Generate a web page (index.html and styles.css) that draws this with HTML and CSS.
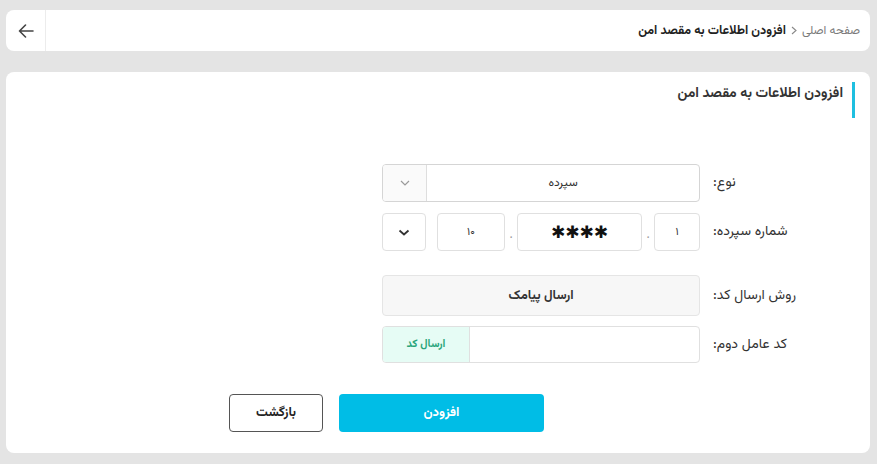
FILE: index.html
```html
<!DOCTYPE html>
<html dir="rtl" lang="fa">
<head>
<meta charset="utf-8">
<title>افزودن اطلاعات به مقصد امن</title>
<link rel="stylesheet" href="styles.css">
</head>
<body>
<div class="page">
  <header class="topbar">
    <nav class="crumbs">
      <span class="crumb-home">صفحه اصلی</span>
      <svg class="crumb-sep" width="6" height="9" viewBox="0 0 6 9"><polyline points="1,1 5,4.5 1,8" fill="none" stroke="#888" stroke-width="1.1"/></svg>
      <span class="crumb-current">افزودن اطلاعات به مقصد امن</span>
    </nav>
    <button class="back" type="button" aria-label="بازگشت">
      <svg width="16" height="14" viewBox="0 0 16 14"><path d="M15 7H1.5M7.5 1L1.5 7l6 6" fill="none" stroke="#444" stroke-width="1.6" stroke-linecap="round" stroke-linejoin="round"/></svg>
    </button>
  </header>

  <main class="card">
    <h1 class="title">افزودن اطلاعات به مقصد امن</h1>

    <form class="form">
      <div class="row row-type">
        <label class="label">نوع:</label>
        <div class="field select">
          <span class="select-value">سپرده</span>
          <span class="select-arrow">
            <svg width="10" height="6" viewBox="0 0 10 6"><polyline points="1,1 5,5 9,1" fill="none" stroke="#9a9a9a" stroke-width="1.2"/></svg>
          </span>
        </div>
      </div>

      <div class="row row-number">
        <label class="label">شماره سپرده:</label>
        <div class="field parts">
          <span class="part part-a">۱</span>
          <span class="dot">.</span>
          <span class="part part-b"><span class="stars">✱✱✱✱</span></span>
          <span class="dot">.</span>
          <span class="part part-c">۱۰</span>
          <span class="part part-arrow">
            <svg width="12" height="7" viewBox="0 0 12 7"><polyline points="1.5,1.5 6,5.5 10.5,1.5" fill="none" stroke="#333" stroke-width="1.8"/></svg>
          </span>
        </div>
      </div>

      <div class="row row-method">
        <label class="label">روش ارسال کد:</label>
        <div class="field method">ارسال پیامک</div>
      </div>

      <div class="row row-code">
        <label class="label">کد عامل دوم:</label>
        <div class="field code">
          <span class="code-input"></span>
          <button class="send" type="button">ارسال کد</button>
        </div>
      </div>
    </form>

    <div class="actions">
      <button class="btn btn-primary" type="button">افزودن</button>
      <button class="btn btn-secondary" type="button">بازگشت</button>
    </div>
  </main>
</div>
</body>
</html>
```

FILE: styles.css
```css
html, body {
  margin: 0;
  padding: 0;
  background: #e4e4e4;
  font-family: "Vazirmatn", "Noto Sans Arabic", "DejaVu Sans", sans-serif;
  color: #333;
}

.page {
  padding: 10px 7px 0 6px;
}

.topbar {
  display: flex;
  height: 41px;
  background: #fff;
  border-radius: 8px;
}

.crumbs {
  flex: 1;
  display: flex;
  align-items: center;
  gap: 5px;
  padding-right: 10px;
  font-size: 12px;
}

.crumb-home {
  color: #7a7a7a;
}

.crumb-current {
  color: #222;
  font-weight: 700;
  font-size: 12.5px;
}

.back {
  width: 40px;
  border: none;
  border-right: 1px solid #ececec;
  background: transparent;
  display: flex;
  align-items: center;
  justify-content: center;
  padding: 0;
}

.card {
  margin-top: 21px;
  height: 381px;
  box-sizing: border-box;
  background: #fff;
  border-radius: 8px;
  padding: 10px 15px 0 0;
}

.title {
  margin: 0;
  height: 36px;
  box-sizing: border-box;
  border-right: 3px solid #1ebfe0;
  padding-right: 9px;
  font-size: 14px;
  font-weight: 700;
  line-height: 24px;
  color: #333;
}

.form {
  margin-top: 46px;
  margin-right: 50px;
  width: 423px;
  display: flex;
  flex-direction: column;
}

.row {
  display: flex;
  align-items: center;
  gap: 13px;
}

.label {
  width: 92px;
  text-align: left;
  font-size: 14px;
  color: #333;
  white-space: nowrap;
}

.field {
  width: 318px;
  box-sizing: border-box;
}

.select {
  height: 38px;
  display: flex;
  border: 1px solid #d5d5d5;
  border-radius: 4px;
  overflow: hidden;
}

.select-value {
  flex: 1;
  display: flex;
  align-items: center;
  justify-content: center;
  font-size: 12px;
  color: #333;
}

.select-arrow {
  width: 43px;
  background: #fafafa;
  border-right: 1px solid #dedede;
  display: flex;
  align-items: center;
  justify-content: center;
}

.row-number {
  margin-top: 11px;
}

.parts {
  height: 38px;
  display: flex;
  align-items: stretch;
}

.part {
  box-sizing: border-box;
  border: 1px solid #e0e0e0;
  border-radius: 4px;
  display: flex;
  align-items: center;
  justify-content: center;
  font-size: 11px;
  color: #333;
}

.part-a { width: 46px; }
.part-b { width: 125px; }
.part-c { width: 68px; }
.part-arrow {
  width: 44px;
  margin-right: 11px;
}

.stars {
  font-family: "DejaVu Sans", sans-serif;
  font-size: 17px;
  letter-spacing: 0;
  color: #111;
}

.dot {
  width: 12px;
  display: flex;
  align-items: center;
  justify-content: center;
  padding-top: 6px;
  font-size: 12px;
  color: #999;
}

.row-method {
  margin-top: 24px;
}

.method {
  height: 41px;
  display: flex;
  align-items: center;
  justify-content: center;
  background: #f7f7f7;
  border: 1px solid #e5e5e5;
  border-radius: 4px;
  font-size: 13px;
  font-weight: 700;
  color: #333;
}

.row-code {
  margin-top: 10px;
}

.code {
  height: 37px;
  display: flex;
  border: 1px solid #e0e0e0;
  border-radius: 4px;
  overflow: hidden;
}

.code-input {
  flex: 1;
}

.send {
  width: 87px;
  border: none;
  border-right: 1px solid #e0e0e0;
  background: #e6fcf5;
  color: #2aa57b;
  font-family: inherit;
  font-size: 11px;
  font-weight: 700;
  padding: 0;
}

.actions {
  margin-top: 31px;
  padding-right: 311px;
  display: flex;
  gap: 16px;
}

.btn {
  height: 38px;
  border-radius: 4px;
  font-family: inherit;
  font-size: 13px;
  font-weight: 700;
  padding: 0;
  box-sizing: border-box;
}

.btn-primary {
  width: 205px;
  border: none;
  background: #00bde6;
  color: #fff;
}

.btn-secondary {
  width: 94px;
  border: 1.5px solid #555;
  background: #fff;
  color: #222;
}
```
